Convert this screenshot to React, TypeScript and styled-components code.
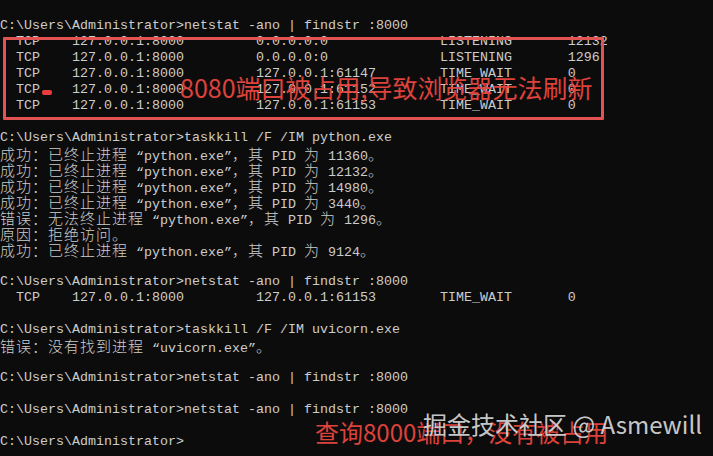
import React from "react";
import styled, { createGlobalStyle } from "styled-components";

const GlobalStyle = createGlobalStyle`
  html, body {
    margin: 0;
    padding: 0;
    background: #0c0c0c;
  }
  body {
    width: 713px;
    height: 456px;
    overflow: hidden;
  }
`;

const Screen = styled.div`
  position: relative;
  width: 713px;
  height: 456px;
  overflow: hidden;
  background: #0c0c0c;
`;

const Console = styled.div`
  display: flex;
  flex-direction: column;
  margin-top: -14px;
  color: #cccccc;
  font-family: "Liberation Mono", monospace;
  font-size: 13.333px;
`;

const Row = styled.div`
  height: 16px;
  line-height: 16px;
  white-space: pre;
`;

const Wide = styled.span`
  font-family: "Noto Sans CJK SC", "Noto Sans CJK JP", sans-serif;
  font-size: 15px;
  font-weight: 300;
  letter-spacing: 1px;
`;

const Frame = styled.div`
  position: absolute;
  left: 3px;
  top: 37px;
  width: 601px;
  height: 83px;
  box-sizing: border-box;
  border: 3px solid #e25353;
  border-radius: 1px;
`;

const Dot = styled.div`
  position: absolute;
  left: 42px;
  top: 90px;
  width: 10px;
  height: 5px;
  border-radius: 2px;
  background: #ee3b3b;
`;

const Note = styled.div<{ $size: number; $left: number; $top: number }>`
  position: absolute;
  left: ${(p) => p.$left}px;
  top: ${(p) => p.$top}px;
  font-family: "Noto Sans CJK SC", sans-serif;
  font-size: ${(p) => p.$size}px;
  line-height: 1;
  white-space: nowrap;
  color: #e8463f;
  opacity: 0.95;
`;

const Watermark = styled.div`
  position: absolute;
  left: 423px;
  top: 412px;
  font-family: "Noto Sans CJK SC", sans-serif;
  font-size: 24px;
  line-height: 1;
  white-space: nowrap;
  color: rgba(225, 225, 225, 0.9);
  text-shadow: 0 0 2px rgba(0, 0, 0, 0.5);
`;

const tcp = (remote: string, state: string, pid: string) =>
  "  TCP    127.0.0.1:8000".padEnd(32, " ") +
  remote.padEnd(23, " ") +
  state.padEnd(16, " ") +
  pid;

const prompt = "C:\\Users\\Administrator>";
const okLine = (pid: string) => `成功：已终止进程 “python.exe”，其 PID 为 ${pid}。`;

const topFragments = (() => {
  const cols: Record<number, string> = { 22: "]", 33: "|", 39: "j", 40: "]", 49: "|", 75: "[", 81: "j", 82: "]" };
  let s = "";
  for (let i = 0; i < 84; i++) s += cols[i] ?? " ";
  return s;
})();

const lines: string[] = [
  topFragments,
  "",
  `${prompt}netstat -ano | findstr :8000`,
  tcp("0.0.0.0:0", "LISTENING", "12132"),
  tcp("0.0.0.0:0", "LISTENING", "1296"),
  tcp("127.0.0.1:61147", "TIME_WAIT", "0"),
  tcp("127.0.0.1:61152", "TIME_WAIT", "0"),
  tcp("127.0.0.1:61153", "TIME_WAIT", "0"),
  "",
  `${prompt}taskkill /F /IM python.exe`,
  okLine("11360"),
  okLine("12132"),
  okLine("14980"),
  okLine("3440"),
  "错误：无法终止进程 “python.exe”，其 PID 为 1296。",
  "原因：拒绝访问。",
  okLine("9124"),
  "",
  `${prompt}netstat -ano | findstr :8000`,
  tcp("127.0.0.1:61153", "TIME_WAIT", "0"),
  "",
  `${prompt}taskkill /F /IM uvicorn.exe`,
  "错误：没有找到进程 “uvicorn.exe”。",
  "",
  `${prompt}netstat -ano | findstr :8000`,
  "",
  `${prompt}netstat -ano | findstr :8000`,
  "",
  prompt,
];

const isWide = (ch: string) => /[\u2E80-\u9FFF\u3000-\u303F\uFF00-\uFFEF]/.test(ch);

function splitRuns(text: string): { wide: boolean; text: string }[] {
  const runs: { wide: boolean; text: string }[] = [];
  for (const ch of Array.from(text)) {
    const w = isWide(ch);
    const last = runs[runs.length - 1];
    if (last && last.wide === w) last.text += ch;
    else runs.push({ wide: w, text: ch });
  }
  return runs;
}

function TermLine({ text }: { text: string }) {
  return (
    <Row>
      {text === ""
        ? " "
        : splitRuns(text).map((r, i) =>
            r.wide ? <Wide key={i}>{r.text}</Wide> : <React.Fragment key={i}>{r.text}</React.Fragment>
          )}
    </Row>
  );
}

export default function App() {
  return (
    <>
      <GlobalStyle />
      <Screen>
        <Console>
          {lines.map((l, i) => (
            <TermLine key={i} text={l} />
          ))}
        </Console>
        <Frame />
        <Dot />
        <Note $size={25} $left={180} $top={75}>
          8080端口被占用,导致浏览器无法刷新
        </Note>
        <Note $size={24} $left={315} $top={420}>
          查询8000端口，没有被占用
        </Note>
        <Watermark>掘金技术社区 @ Asmewill</Watermark>
      </Screen>
    </>
  );
}
